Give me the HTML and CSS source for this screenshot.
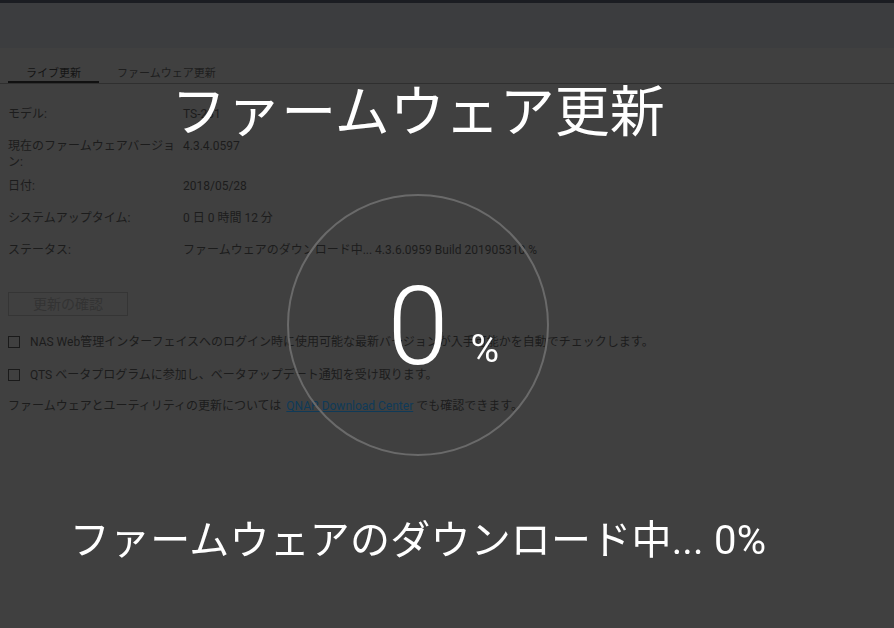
FILE: index.html
```html
<!DOCTYPE html>
<html lang="ja">
<head>
<meta charset="utf-8">
<title>ファームウェア更新</title>
<link rel="stylesheet" href="styles.css">
</head>
<body>
<div class="topbar"></div>
<div class="header"></div>
<nav class="tabs">
  <div class="tab active">ライブ更新</div>
  <div class="tab">ファームウェア更新</div>
</nav>
<main class="content">
  <div class="info">
    <div class="row"><div class="label">モデル:</div><div class="value">TS-231</div></div>
    <div class="row"><div class="label">現在のファームウェアバージョン:</div><div class="value">4.3.4.0597</div></div>
    <div class="row"><div class="label">日付:</div><div class="value">2018/05/28</div></div>
    <div class="row"><div class="label">システムアップタイム:</div><div class="value">0 日 0 時間 12 分</div></div>
    <div class="row"><div class="label">ステータス:</div><div class="value">ファームウェアのダウンロード中... 4.3.6.0959 Build 201905310 %</div></div>
  </div>
  <button class="btn" disabled>更新の確認</button>
  <label class="check check-first"><span class="box"></span>NAS Web管理インターフェイスへのログイン時に使用可能な最新バージョンが入手可能かを自動でチェックします。</label>
  <label class="check"><span class="box"></span>QTS ベータプログラムに参加し、ベータアップデート通知を受け取ります。</label>
  <p class="note">ファームウェアとユーティリティの更新については <a class="link" href="#">QNAP Download Center</a> でも確認できます。</p>
</main>
<div class="overlay">
  <h1 class="title">ファームウェア更新</h1>
  <div class="ring"><span class="num">0<span class="pct">%</span></span></div>
  <p class="status">ファームウェアのダウンロード中... 0%</p>
</div>
</body>
</html>
```
FILE: styles.css
```css
* { box-sizing: border-box; }
html, body {
  margin: 0;
  padding: 0;
  background: #404040;
  font-family: Roboto, "Noto Sans CJK JP", sans-serif;
  color: #1c1c1c;
  font-size: 12px;
}
body { width: 894px; height: 628px; overflow: hidden; }
.topbar { height: 3px; background: #1b1d22; }
.header { height: 45px; background: #3c3d3f; }
.tabs {
  display: flex;
  padding: 19px 0 0 8px;
  border-bottom: 1px solid #2f2f2f;
}
.tab {
  font-size: 11px;
  line-height: 14px;
  padding: 0 18px;
  border-bottom: 2px solid transparent;
  color: #1e1e1e;
}
.tab.active { border-bottom-color: #111; color: #141414; }
.content { padding: 0 8px; }
.info { margin-top: 18px; }
.row {
  display: flex;
  align-items: flex-start;
  min-height: 32px;
  padding: 4px 0;
  line-height: 16px;
}
.label { width: 175px; }
.value { flex: 1; }
.btn {
  display: block;
  margin-top: 22px;
  width: 120px;
  height: 24px;
  border: 1px solid #353535;
  background: transparent;
  color: #333;
  font-family: Roboto, "Noto Sans CJK JP", sans-serif;
  font-size: 14px;
  line-height: 20px;
  padding: 0;
}
.check {
  display: flex;
  align-items: center;
  line-height: 16px;
  margin-top: 17px;
}
.check-first { margin-top: 18px; }
.box {
  width: 12px;
  height: 12px;
  border: 1px solid #1a1a1a;
  margin-right: 10px;
  flex: none;
}
.note { margin: 15px 0 0; line-height: 16px; }
.link { color: #0f3a58; text-decoration: underline; margin-left: 2px; }
.overlay {
  position: fixed;
  inset: 0;
  display: flex;
  flex-direction: column;
  align-items: center;
  padding-right: 58px;
  color: #fff;
}
.title {
  margin: 80px 0 0;
  font-family: "Noto Sans CJK JP", sans-serif;
  font-weight: 400;
  font-size: 55px;
  line-height: 55px;
}
.ring {
  margin-top: 59px;
  width: 262px;
  height: 262px;
  border: 2px solid #6a6a6a;
  border-radius: 50%;
  display: flex;
  align-items: center;
  justify-content: center;
}
.num {
  position: relative;
  font-family: Roboto, sans-serif;
  font-weight: 300;
  font-size: 110px;
  line-height: 110px;
  padding-top: 4px;
}
.pct {
  position: absolute;
  left: 100%;
  bottom: 13px;
  margin-left: 22px;
  font-size: 39px;
  line-height: 39px;
  font-weight: 400;
}
.status {
  margin: 65px 0 0;
  font-size: 40px;
  line-height: 40px;
  font-family: Roboto, "Noto Sans CJK JP", sans-serif;
  letter-spacing: 0.2px;
}
```
